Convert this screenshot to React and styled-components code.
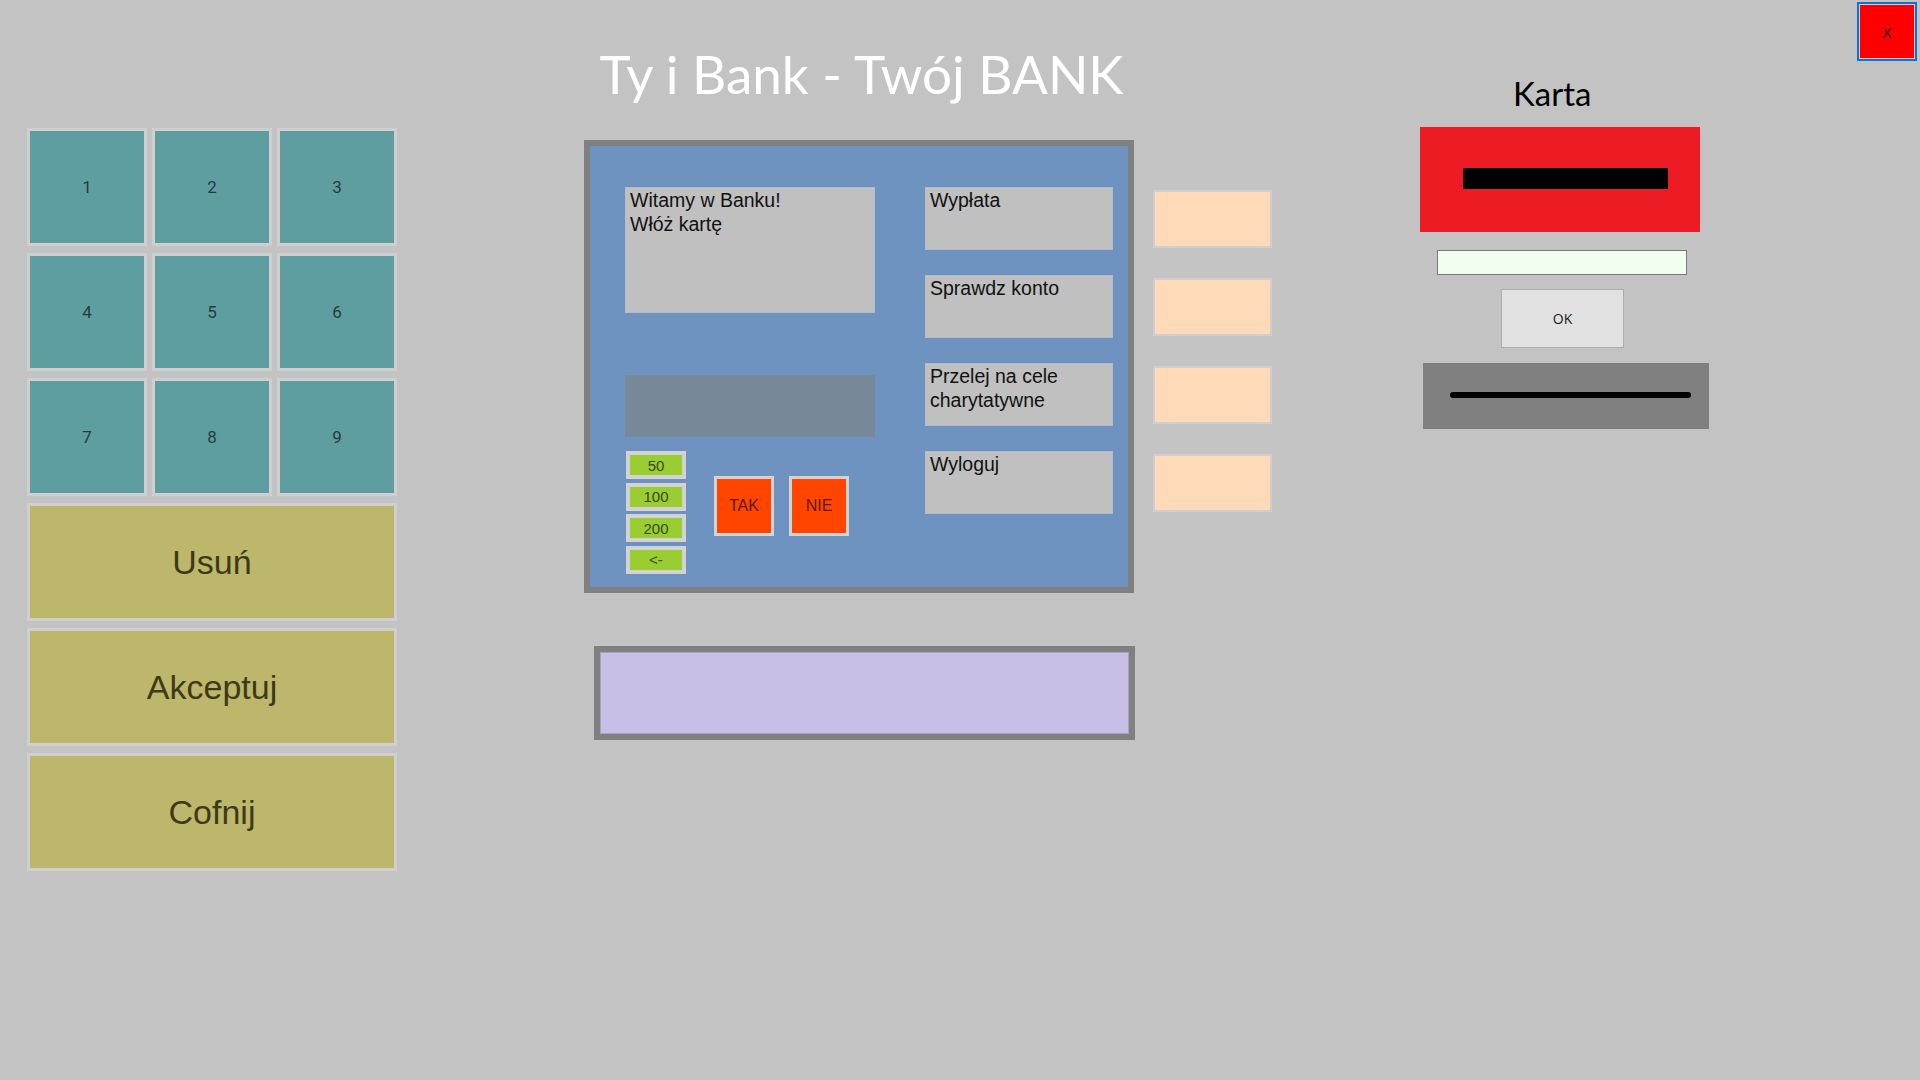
import React from "react";
import styled, { createGlobalStyle } from "styled-components";

const Global = createGlobalStyle`
  html, body { margin: 0; padding: 0; background: #c3c3c3; }
  body { font-family: "Liberation Sans", Arial, sans-serif; }
  * { box-sizing: border-box; }
`;

const Page = styled.div`
  width: 1920px;
  height: 1080px;
  display: flex;
  align-items: flex-start;
  background: #c3c3c3;
  overflow: hidden;
`;

const Keypad = styled.div`
  margin-left: 27px;
  margin-top: 128px;
  display: grid;
  grid-template-columns: repeat(3, 120px);
  grid-auto-rows: 118px;
  column-gap: 5px;
  row-gap: 7px;
`;

const KeyButton = styled.button`
  border: 3px solid #cfcfcf;
  background: ${(p) => (p.$wide ? "#bdb76b" : "#5f9ea0")};
  grid-column: ${(p) => (p.$wide ? "1 / span 3" : "auto")};
  color: ${(p) => (p.$wide ? "#3d3a18" : "#263c3c")};
  font-family: ${(p) => (p.$wide ? '"Liberation Sans", Arial, sans-serif' : 'Roboto, "Liberation Sans", sans-serif')};
  font-size: ${(p) => (p.$wide ? "34px" : "17px")};
  padding: 0;
  margin: 0;
  display: flex;
  align-items: center;
  justify-content: center;
  cursor: pointer;
`;

const Center = styled.div`
  margin-left: 187px;
  width: 552px;
  display: flex;
  flex-direction: column;
  align-items: flex-start;
`;

const Title = styled.h1`
  margin: 44px 0 0 0;
  padding-left: 5px;
  width: 550px;
  text-align: center;
  font-family: Lato, "Open Sans", sans-serif;
  font-weight: 400;
  font-size: 53px;
  line-height: 60px;
  color: #ffffff;
  white-space: nowrap;
`;

const Frame = styled.div`
  margin-top: 36px;
  width: 550px;
  height: 453px;
  border: 6px solid #808080;
  background: #6f93c0;
  display: grid;
  grid-template-columns: 250px 188px;
  column-gap: 50px;
  padding: 41px 15px 0 35px;
`;

const LeftCol = styled.div`
  display: flex;
  flex-direction: column;
  align-items: flex-start;
`;

const Screen = styled.div`
  width: 250px;
  height: 126px;
  background: #c0c0c0;
  border: 1px solid #b4bcc8;
  padding: 0 4px;
  font-size: 19.5px;
  line-height: 24px;
  color: #111;
`;

const Display = styled.div`
  margin-top: 62px;
  width: 250px;
  height: 62px;
  background: #778899;
`;

const Controls = styled.div`
  margin-top: 14px;
  display: flex;
  align-items: flex-start;
`;

const AmountStack = styled.div`
  margin-left: 1px;
  display: flex;
  flex-direction: column;
  gap: 3.5px;
`;

const Amount = styled.button`
  width: 60px;
  height: 28px;
  border: 4px solid #d3d3d3;
  background: #9acd32;
  color: #3a4712;
  font-family: "Liberation Sans", Arial, sans-serif;
  font-size: 15px;
  padding: 0;
  display: flex;
  align-items: center;
  justify-content: center;
`;

const Confirm = styled.button`
  margin-top: 25px;
  margin-left: ${(p) => p.$gap}px;
  width: 60px;
  height: 60px;
  border: 3px solid #d3d3d3;
  background: #ff4500;
  color: #5a1a00;
  font-family: "Liberation Sans", Arial, sans-serif;
  font-size: 16px;
  padding: 0;
  display: flex;
  align-items: center;
  justify-content: center;
`;

const Menu = styled.div`
  display: flex;
  flex-direction: column;
  gap: 25px;
`;

const MenuItem = styled.div`
  width: 188px;
  height: 63px;
  background: #c0c0c0;
  border: 1px solid #b4bcc8;
  padding: 0 4px;
  font-size: 19.5px;
  line-height: 24px;
  color: #111;
`;

const Tray = styled.div`
  margin-top: 53px;
  margin-left: 10px;
  width: 541px;
  height: 94px;
  border: 6px solid #808080;
  background: #c8bfe7;
  box-shadow: inset 0 0 0 1px #a7a2bd;
`;

const SideKeys = styled.div`
  margin-left: 17px;
  margin-top: 190px;
  display: flex;
  flex-direction: column;
  gap: 30px;
`;

const SideKey = styled.button`
  width: 119px;
  height: 58px;
  border: 2px solid #cfcfcf;
  background: #ffdab9;
  padding: 0;
`;

const CardPanel = styled.div`
  margin-left: 148px;
  width: 290px;
  display: flex;
  flex-direction: column;
  align-items: flex-start;
`;

const CardLabel = styled.div`
  margin-top: 74px;
  margin-left: 93px;
  font-family: Lato, "Open Sans", sans-serif;
  font-size: 33px;
  line-height: 38px;
  color: #000;
`;

const Card = styled.div`
  margin-top: 15px;
  width: 280px;
  height: 105px;
  background: #ed1c24;
  padding: 41px 0 0 43px;
`;

const Stripe = styled.div`
  width: 205px;
  height: 21px;
  background: #000;
`;

const PinInput = styled.input`
  margin-top: 18px;
  margin-left: 17px;
  width: 250px;
  height: 25px;
  border: 1px solid #7a7a7a;
  background: #f0fff0;
  outline: none;
`;

const OkButton = styled.button`
  margin-top: 14px;
  margin-left: 81px;
  width: 123px;
  height: 59px;
  border: 1px solid #adadad;
  background: #e1e1e1;
  color: #1b1b2a;
  font-family: "Open Sans", "Noto Sans", sans-serif;
  font-size: 14px;
  padding: 0;
`;

const Slot = styled.div`
  margin-top: 15px;
  margin-left: 3px;
  width: 286px;
  height: 66px;
  background: #808080;
  padding: 29px 0 0 27px;
`;

const SlotLine = styled.div`
  width: 241px;
  height: 6px;
  border-radius: 3px;
  background: #000;
`;

const CloseButton = styled.button`
  margin-left: auto;
  margin-right: 3px;
  margin-top: 2px;
  width: 60px;
  height: 59px;
  border: 2px solid #0078d7;
  box-shadow: inset 0 0 0 1px #f0c0c0;
  background: #ff0000;
  color: #111;
  font-family: "Open Sans", "Noto Sans", sans-serif;
  font-size: 15px;
  padding: 0;
`;

export default function App() {
  const digits = ["1", "2", "3", "4", "5", "6", "7", "8", "9"];
  return (
    <>
      <Global />
      <Page>
        <Keypad>
          {digits.map((d) => (
            <KeyButton key={d}>{d}</KeyButton>
          ))}
          <KeyButton $wide>Usuń</KeyButton>
          <KeyButton $wide>Akceptuj</KeyButton>
          <KeyButton $wide>Cofnij</KeyButton>
        </Keypad>

        <Center>
          <Title>Ty i Bank - Twój BANK</Title>
          <Frame>
            <LeftCol>
              <Screen>
                Witamy w Banku!
                <br />
                Włóż kartę
              </Screen>
              <Display />
              <Controls>
                <AmountStack>
                  <Amount>50</Amount>
                  <Amount>100</Amount>
                  <Amount>200</Amount>
                  <Amount>&lt;-</Amount>
                </AmountStack>
                <Confirm $gap={28}>TAK</Confirm>
                <Confirm $gap={15}>NIE</Confirm>
              </Controls>
            </LeftCol>
            <Menu>
              <MenuItem>Wypłata</MenuItem>
              <MenuItem>Sprawdz konto</MenuItem>
              <MenuItem>
                Przelej na cele
                <br />
                charytatywne
              </MenuItem>
              <MenuItem>Wyloguj</MenuItem>
            </Menu>
          </Frame>
          <Tray />
        </Center>

        <SideKeys>
          <SideKey />
          <SideKey />
          <SideKey />
          <SideKey />
        </SideKeys>

        <CardPanel>
          <CardLabel>Karta</CardLabel>
          <Card>
            <Stripe />
          </Card>
          <PinInput />
          <OkButton>OK</OkButton>
          <Slot>
            <SlotLine />
          </Slot>
        </CardPanel>

        <CloseButton>X</CloseButton>
      </Page>
    </>
  );
}
